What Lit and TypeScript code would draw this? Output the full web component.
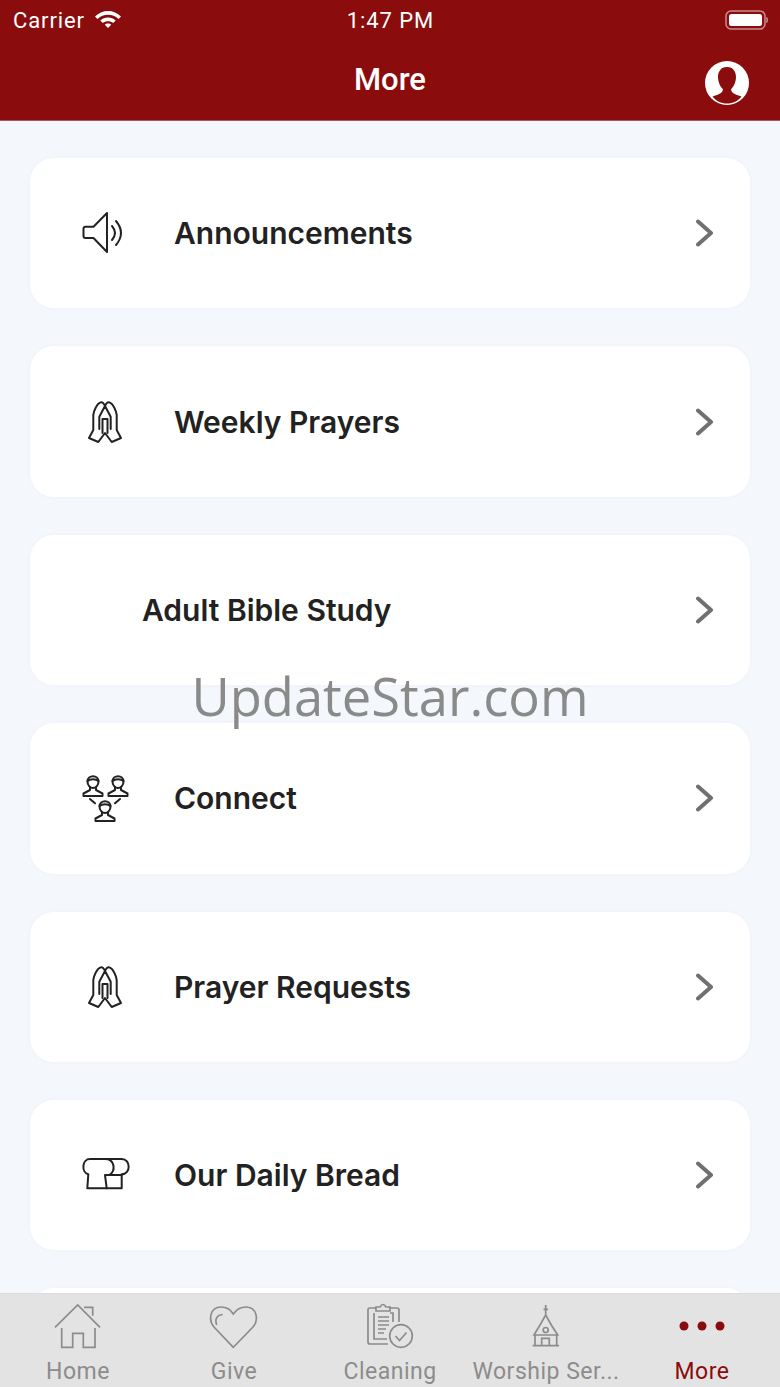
import { LitElement, html, css, svg, TemplateResult } from "lit";
import { customElement } from "lit/decorators.js";

// Shared hands icon, used by two rows
const hands = svg`
  <path d="M7 40 11.300 32V17C12 12 15 6 18 4.700 20.500 3.500 22 5.500 23 8 24 5.500 25.500 3.500 28 4.700 31 6 34 12 34.700 17V32L39 40 29.700 44 23 35 16.300 44Z"/>
  <path d="M23 8 17.300 18.700V31M23 8 28.700 18.700V31M20.500 21V35M25.500 21V35M20.500 21H25.500"/>
`;

// One bust, centred on x = 0, from y-6 to y+14
const person = (x: number, y: number) => svg`
  <g transform="translate(${x} ${y})">
    <path d="M-5.500 -0.500C-5.500 -7.500 5.500 -7.500 5.500 -0.500 5.500 3 3 6 0 6S-5.500 3-5.500 -0.500Z"/>
    <path d="M-5.500 -1C-3 -3.500 3 -3.500 5.500 -1"/>
    <path d="M-3 5.500V8L-9.500 11.500V14H9.500V11.500L3 8V5.500"/>
  </g>
`;

const icons: Record<string, TemplateResult> = {
  speaker: html`<svg class="icon" viewBox="0 0 48 48">
    <path d="M25 4 11.500 17.700H3.500Q1.500 17.700 1.500 19.700V27Q1.500 29 3.500 29H11.500L25 43Z"/>
    <path d="M30 17Q36 24 30 31M34 12Q44 24 34 36"/>
  </svg>`,
  hands: html`<svg class="icon" viewBox="0 0 48 48">${hands}</svg>`,
  people: html`<svg class="icon" viewBox="0 0 48 48">
    ${person(11, 8)}${person(36, 8)}${person(23, 33)}
    <path d="M8 25 13 29.300M38 25 33 29.300"/>
  </svg>`,
  bread: html`<svg class="icon" viewBox="0 0 48 48">
    <path d="M8 8H39.700C49 8 49 23.300 39.700 23.300L39.700 37.300H5.300L6.300 23.300C-1 21 0 8 8 8Z"/>
    <path d="M23 8C33 8 34 20 27.300 24M23 24H39.700M23 24 24.700 37.300"/>
  </svg>`,
};

const tabIcons: Record<string, TemplateResult> = {
  home: html`<svg class="tab-icon" viewBox="0 0 60 48">
    <path d="M7 24.300 29.700 2 52 24.300M36 4.300H44.700V12.700"/>
    <path d="M13.700 25V44.300H24.700V30.300H35.300V44.300H47V25"/>
  </svg>`,
  heart: html`<svg class="tab-icon" viewBox="0 0 60 48">
    <path d="M29.300 44.300 10 24C4 17 6 4 17 4 23 4 27 7 29.300 11 32 7 36 4 42 4 53 4 55 17 49 24Z"/>
    <path d="M12.700 22C10.500 16 13 12 18.700 11.500"/>
  </svg>`,
  cleaning: html`<svg class="tab-icon" viewBox="0 0 60 48">
    <path d="M28 41H10Q8 41 8 39V7Q8 5 10 5H16M30 5H37Q39 5 39 7V19"/>
    <path d="M14 10V36H27M33 19V10H30"/>
    <path d="M16 8V4H20Q23 -1 26 4H30V8Z"/>
    <path d="M18 14H29M18 18H29M18 22H29M18 26H26M18 30H24"/>
    <circle cx="41" cy="33" r="11.300"/>
    <path d="M35.500 33 39.500 37.500 46.500 29.500"/>
  </svg>`,
  church: html`<svg class="tab-icon" viewBox="0 0 60 48">
    <path d="M29.700 2V12M27.500 6.300H32M29.700 12 24 22 18 32H41.700L35.300 22Z"/>
    <path d="M19 32V42M40.700 32V42M16.700 42.700H43M25.700 42V35.300H33.300V42"/>
    <circle cx="29.700" cy="27" r="2.500"/>
  </svg>`,
};

const rows = [
  { label: "Announcements", icon: "speaker" },
  { label: "Weekly Prayers", icon: "hands" },
  { label: "Adult Bible Study", icon: "" },
  { label: "Connect", icon: "people" },
  { label: "Prayer Requests", icon: "hands" },
  { label: "Our Daily Bread", icon: "bread" },
];

const tabs = [
  { label: "Home", icon: "home" },
  { label: "Give", icon: "heart" },
  { label: "Cleaning", icon: "cleaning" },
  { label: "Worship Ser...", icon: "church" },
];

@customElement("app-root")
export class AppRoot extends LitElement {
  static override styles = css`
    :host {
      display: flex;
      flex-direction: column;
      position: relative;
      width: 780px;
      height: 1387px;
      overflow: hidden;
      background: #f4f7fb;
      font-family: Inter, "Liberation Sans", sans-serif;
    }
    .top {
      flex: none;
      height: 121px;
      box-sizing: border-box;
      background: #8a0c0d;
      border-bottom: 1px solid #a9585a;
      color: #fff;
    }
    .status {
      height: 40px;
      display: grid;
      grid-template-columns: 1fr auto 1fr;
      align-items: center;
      padding: 0 12px 0 13px;
      font-size: 22px;
      font-family: Roboto, "Liberation Sans", sans-serif;
      letter-spacing: 0.9px;
    }
    .carrier {
      display: flex;
      align-items: center;
      gap: 9px;
    }
    .wifi {
      width: 28px;
      height: 22px;
      fill: #fff;
      margin-top: -4px;
    }
    .battery {
      justify-self: end;
      width: 43px;
      height: 20px;
    }
    .nav {
      height: 80px;
      display: grid;
      grid-template-columns: 1fr auto 1fr;
      align-items: center;
      padding: 0 31px;
      box-sizing: border-box;
    }
    .nav h1 {
      grid-column: 2;
      margin: 0 0 2px;
      font-size: 31px;
      font-weight: 500;
      font-family: Roboto, "Liberation Sans", sans-serif;
    }
    .avatar {
      justify-self: end;
      width: 44px;
      height: 44px;
      margin-top: 5px;
    }
    .list {
      flex: 1;
      min-height: 0;
      overflow: hidden;
      display: flex;
      flex-direction: column;
      gap: 38px;
      padding: 37px 30px 0;
    }
    .card {
      flex: none;
      height: 150.4px;
      box-sizing: border-box;
      display: flex;
      align-items: center;
      background: #fff;
      border-radius: 24px;
      padding: 0 36px 0 52px;
      box-shadow: 0 0 4px rgba(190, 200, 215, 0.1);
    }
    .icon {
      flex: none;
      width: 48px;
      height: 48px;
      margin-right: 44px;
      overflow: visible;
      fill: none;
      stroke: #222;
      stroke-width: 2;
      stroke-linejoin: round;
      stroke-linecap: round;
    }
    .label {
      flex: 1;
      font-size: 30px;
      font-weight: 600;
      color: #222;
    }
    .label.bare {
      margin-left: 60px;
    }
    .chevron {
      flex: none;
      width: 18px;
      height: 28px;
      fill: none;
      stroke: #707070;
      stroke-width: 4;
      stroke-linecap: round;
      stroke-linejoin: round;
    }
    .tabs {
      flex: none;
      height: 94px;
      box-sizing: border-box;
      display: grid;
      grid-template-columns: repeat(5, 156px);
      background: #e3e3e3;
      border-top: 1px solid #dcdcdc;
      color: #8c8c8c;
      font-size: 23px;
      font-family: Roboto, "Liberation Sans", sans-serif;
      letter-spacing: 0.5px;
    }
    .tab {
      display: flex;
      flex-direction: column;
      align-items: center;
      padding-top: 9px;
      white-space: nowrap;
    }
    .tab span {
      margin-top: 8px;
      line-height: 26px;
    }
    .tab-icon {
      width: 60px;
      height: 48px;
      overflow: visible;
      fill: none;
      stroke: #8c8c8c;
      stroke-width: 1.7;
    }
    .tab.active {
      color: #8a0c0d;
    }
    .dots {
      width: 60px;
      height: 48px;
      fill: #8a0c0d;
    }
    .watermark {
      position: absolute;
      left: 0;
      right: 0;
      top: 658px;
      text-align: center;
      font-family: "Open Sans", sans-serif;
      font-size: 52.5px;
      line-height: 76px;
      color: #8a8a8a;
      pointer-events: none;
    }
  `;

  private renderRow(row: { label: string; icon: string }) {
    return html`
      <div class="card">
        ${row.icon ? icons[row.icon] : ""}
        <div class="label ${row.icon ? "" : "bare"}">${row.label}</div>
        <svg class="chevron" viewBox="0 0 18 28"><path d="M2 2.500 15 14 2 25.500"/></svg>
      </div>
    `;
  }

  override render(): TemplateResult {
    return html`
      <header class="top">
        <div class="status">
          <div class="carrier">
            Carrier
            <svg class="wifi" viewBox="0 0 28 22">
              <path d="M14 4C19 4 23.500 6 27 9.500L24.500 12C21.500 9.200 18 7.800 14 7.800S6.500 9.200 3.500 12L1 9.500C4.500 6 9 4 14 4Z"/>
              <path d="M14 10.500C17 10.500 19.600 11.600 21.700 13.600L19.200 16C17.800 14.800 16 14.200 14 14.200S10.200 14.800 8.800 16L6.300 13.600C8.400 11.600 11 10.500 14 10.500Z"/>
              <path d="M14 16.500C15.300 16.500 16.400 17 17.200 17.800L14 21 10.800 17.800C11.600 17 12.700 16.500 14 16.500Z"/>
            </svg>
          </div>
          <div>1:47 PM</div>
          <svg class="battery" viewBox="0 0 43 20">
            <rect x="1" y="1" width="39" height="18" rx="5" fill="none" stroke="#c98c8d" stroke-width="1.500"/>
            <rect x="4" y="4" width="33" height="12" rx="2.500" fill="#fff"/>
            <path d="M41.500 7.500Q43 10 41.500 12.500" fill="none" stroke="#c98c8d" stroke-width="1.500"/>
          </svg>
        </div>
        <div class="nav">
          <h1>More</h1>
          <svg class="avatar" viewBox="0 0 44 44">
            <circle cx="22" cy="22" r="22" fill="#fff"/>
            <path fill="#8a0c0d" d="M22 6C15.500 6 13 11 13 16 13 21 15.500 26 17.800 28 18.200 31 16 33 7.500 35.500 11 40 16 42.500 22 42.500S33 40 36.500 35.500C28 33 25.800 31 26.200 28 28.500 26 31 21 31 16 31 11 28.500 6 22 6Z"/>
          </svg>
        </div>
      </header>
      <main class="list">
        ${rows.map((r) => this.renderRow(r))}
        <div class="card"></div>
      </main>
      <nav class="tabs">
        ${tabs.map(
          (t) => html`<div class="tab">${tabIcons[t.icon]}<span>${t.label}</span></div>`
        )}
        <div class="tab active">
          <svg class="dots" viewBox="0 0 60 48">
            <circle cx="12" cy="23" r="4.500"/>
            <circle cx="30" cy="23" r="4.500"/>
            <circle cx="48" cy="23" r="4.500"/>
          </svg>
          <span>More</span>
        </div>
      </nav>
      <div class="watermark">UpdateStar.com</div>
    `;
  }
}
